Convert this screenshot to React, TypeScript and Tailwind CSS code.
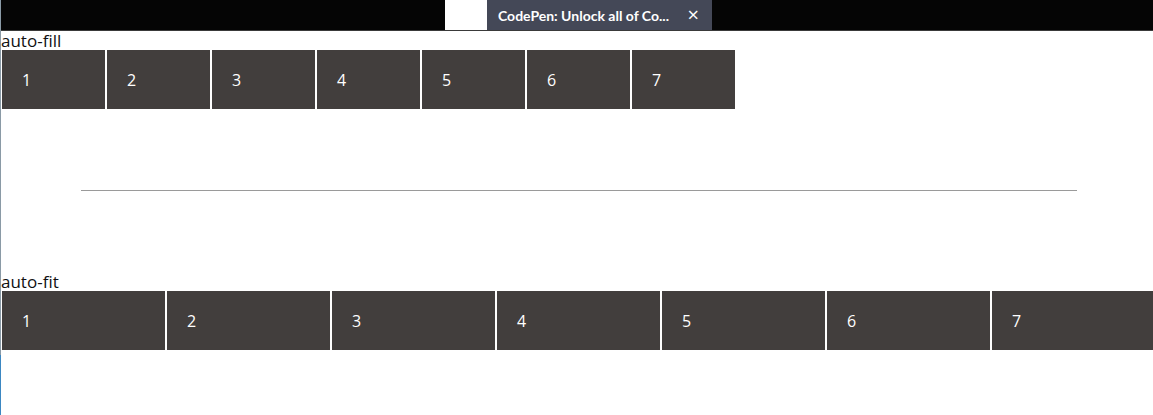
import React from "react";

const items = [1, 2, 3, 4, 5, 6, 7];

const Item: React.FC<{ n: number }> = ({ n }) => (
  <div className="flex h-[59px] items-center bg-[#423e3d] pl-[20px] text-[16px] text-white">
    {n}
  </div>
);

export default function App() {
  return (
    <div
      className="flex h-[415px] w-[1153px] overflow-hidden bg-white text-[#111]"
      style={{ fontFamily: '"Open Sans", "Noto Sans", sans-serif' }}
    >
      <div className="flex w-[1px] shrink-0 flex-col">
        <div className="h-[355px] bg-[#8a9aa6]" />
        <div className="flex-1 bg-[#3b87c2]" />
      </div>
      <div className="flex w-[1152px] shrink-0 flex-col">
        {/* codepen top bar */}
        <div className="flex h-[31px] border-b border-[#3a3a3a] bg-[#050505]">
          <div className="ml-[444px] h-full w-[42px] bg-white" />
          <div className="flex h-full w-[225px] items-center justify-between bg-[#444857] pl-[11px] pr-[13px] text-[14px] font-bold text-white">
            <span style={{ fontFamily: '"Lato", "Open Sans", sans-serif' }}>
              CodePen: Unlock all of Co...
            </span>
            <span className="text-[20px] font-normal leading-none">×</span>
          </div>
        </div>

        <div className="h-[19px] text-[17px] leading-[19px]">auto-fill</div>
        <div className="ml-[1px] grid w-[1153px] grid-cols-[repeat(auto-fill,minmax(100px,1fr))] gap-[2px]">
          {items.map((n) => (
            <Item key={n} n={n} />
          ))}
        </div>

        <div className="ml-[80px] mr-[76px] mt-[81px] h-[1px] bg-[#9a9a9a]" />

        <div className="mt-[81px] h-[19px] text-[17px] leading-[19px]">auto-fit</div>
        <div className="ml-[1px] grid w-[1153px] grid-cols-[repeat(auto-fit,minmax(100px,1fr))] gap-[2px]">
          {items.map((n) => (
            <Item key={n} n={n} />
          ))}
        </div>
      </div>
    </div>
  );
}
